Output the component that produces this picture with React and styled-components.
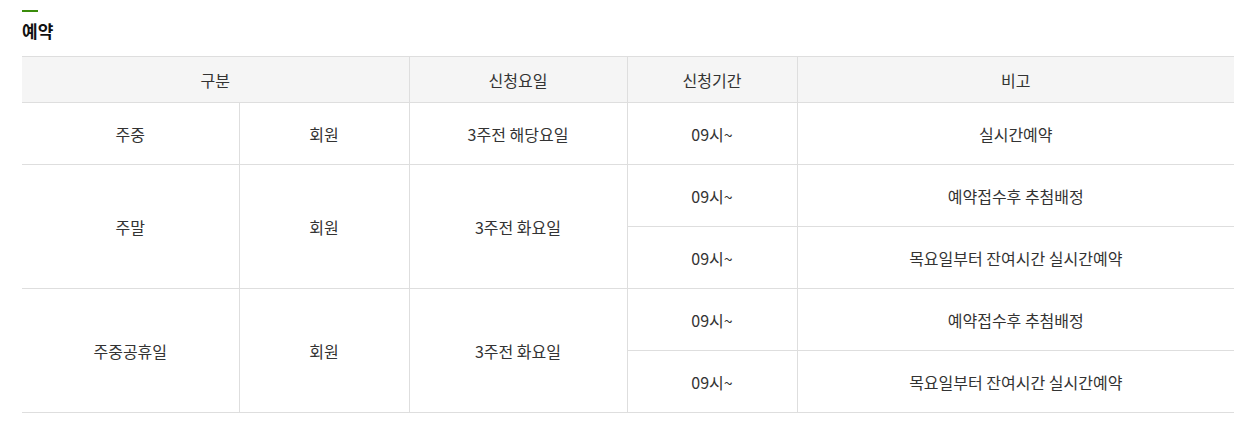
import React from "react";
import styled, { createGlobalStyle } from "styled-components";

const GlobalStyle = createGlobalStyle`
  body {
    margin: 0;
    background: #fff;
    font-family: "Noto Sans CJK KR", "Noto Sans", sans-serif;
    color: #333;
  }
`;

const Section = styled.section`
  padding: 10px 18px 0 22px;
`;

const Title = styled.h3`
  margin: 0 0 17px;
  font-size: 17px;
  font-weight: 700;
  color: #111;
  line-height: 1;
  &::before {
    content: "";
    display: block;
    width: 16px;
    height: 2px;
    background: #3a8c0c;
    margin-bottom: 10px;
  }
`;

const Table = styled.table`
  width: 1212px;
  border-collapse: collapse;
  table-layout: fixed;
  border-top: 1px solid #dedede;
  font-size: 16px;
`;

const Th = styled.th`
  height: 45px;
  padding: 0;
  background: #f5f5f5;
  font-weight: 400;
  color: #333;
  border-bottom: 1px solid #dedede;
  border-left: 1px solid #dedede;
  &:first-child {
    border-left: none;
  }
`;

const Td = styled.td`
  height: 61px;
  padding: 0;
  text-align: center;
  color: #333;
  border-bottom: 1px solid #dedede;
  border-left: ${({ $first }) => ($first ? "none" : "1px solid #dedede")};
`;

const rows = [
  {
    kind: "주중",
    member: "회원",
    day: "3주전 해당요일",
    items: [{ time: "09시~", note: "실시간예약" }],
  },
  {
    kind: "주말",
    member: "회원",
    day: "3주전 화요일",
    items: [
      { time: "09시~", note: "예약접수후 추첨배정" },
      { time: "09시~", note: "목요일부터 잔여시간 실시간예약" },
    ],
  },
  {
    kind: "주중공휴일",
    member: "회원",
    day: "3주전 화요일",
    items: [
      { time: "09시~", note: "예약접수후 추첨배정" },
      { time: "09시~", note: "목요일부터 잔여시간 실시간예약" },
    ],
  },
];

const App = () => {
  return (
    <>
      <GlobalStyle />
      <Section>
        <Title>예약</Title>
        <Table>
          <colgroup>
            <col style={{ width: 217 }} />
            <col style={{ width: 170 }} />
            <col style={{ width: 218 }} />
            <col style={{ width: 170 }} />
            <col />
          </colgroup>
          <thead>
            <tr>
              <Th colSpan={2}>구분</Th>
              <Th>신청요일</Th>
              <Th>신청기간</Th>
              <Th>비고</Th>
            </tr>
          </thead>
          <tbody>
            {rows.map((row) =>
              row.items.map((item, index) => (
                <tr key={row.kind + index}>
                  {index === 0 && (
                    <>
                      <Td $first rowSpan={row.items.length}>
                        {row.kind}
                      </Td>
                      <Td rowSpan={row.items.length}>{row.member}</Td>
                      <Td rowSpan={row.items.length}>{row.day}</Td>
                    </>
                  )}
                  <Td>{item.time}</Td>
                  <Td>{item.note}</Td>
                </tr>
              ))
            )}
          </tbody>
        </Table>
      </Section>
    </>
  );
};

export default App;
